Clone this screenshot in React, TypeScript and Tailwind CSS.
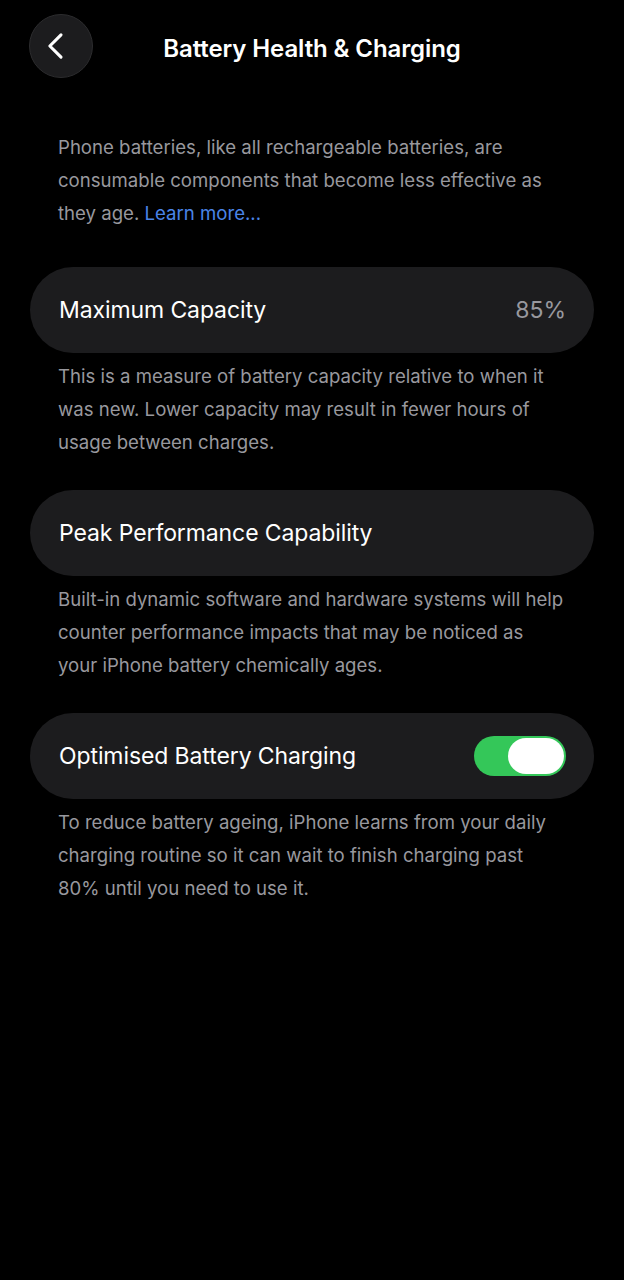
const font = { fontFamily: "Inter, 'Noto Sans', sans-serif" };

function Row({ label, children }: { label: string; children?: React.ReactNode }) {
  return (
    <div className="mx-[30px] flex h-[86px] items-center justify-between rounded-[43px] bg-[#1c1c1e] pl-[29px] pr-[28px]">
      <span className="text-[23px] tracking-[-0.1px] text-white">{label}</span>
      {children}
    </div>
  );
}

function Footer({ children }: { children: React.ReactNode }) {
  return (
    <p className="mt-[7px] mb-[31px] px-[58px] text-[18.6px] leading-[33px] text-[#98989e]">
      {children}
    </p>
  );
}

export default function App() {
  return (
    <div style={font} className="min-h-[1280px] w-[624px] bg-black">
      {/* Header */}
      <div className="relative flex h-[94px] items-start pt-[14px]">
        <button className="ml-[29px] flex h-[64px] w-[64px] items-center justify-center rounded-full border border-[#2c2c2e] bg-[#1c1c1e]">
          <svg width="64" height="64" viewBox="0 0 64 64" fill="none">
            <path
              d="M26 21 L14.5 32.5 L26 44"
              stroke="white"
              strokeWidth="3.2"
              strokeLinecap="round"
              strokeLinejoin="round"
              transform="translate(6 -0.5)"
            />
          </svg>
        </button>
        <h1 className="absolute left-0 right-0 top-[31px] text-center text-[24px] font-semibold tracking-[-0.1px] text-white">
          Battery Health &amp; Charging
        </h1>
      </div>

      <p className="mt-[37px] mb-[37px] px-[58px] text-[18.6px] leading-[33px] text-[#98989e]">
        Phone batteries, like all rechargeable batteries, are consumable components that
        become less effective as they age.{" "}
        <span className="text-[#4a85e8]">Learn more...</span>
      </p>

      <Row label="Maximum Capacity">
        <span className="text-[23px] text-[#98989e]">85%</span>
      </Row>
      <Footer>
        This is a measure of battery capacity relative to when it was new. Lower capacity
        may result in fewer hours of usage between charges.
      </Footer>

      <Row label="Peak Performance Capability" />
      <Footer>
        Built-in dynamic software and hardware systems will help counter performance
        impacts that may be noticed as your iPhone battery chemically ages.
      </Footer>

      <Row label="Optimised Battery Charging">
        <div className="flex h-[40px] w-[92px] items-center justify-end rounded-full bg-[#34c759] pr-[2px]">
          <div className="h-[36px] w-[56px] rounded-full bg-white" />
        </div>
      </Row>
      <Footer>
        To reduce battery ageing, iPhone learns from your daily charging routine so it can
        wait to finish charging past 80% until you need to use it.
      </Footer>
    </div>
  );
}
